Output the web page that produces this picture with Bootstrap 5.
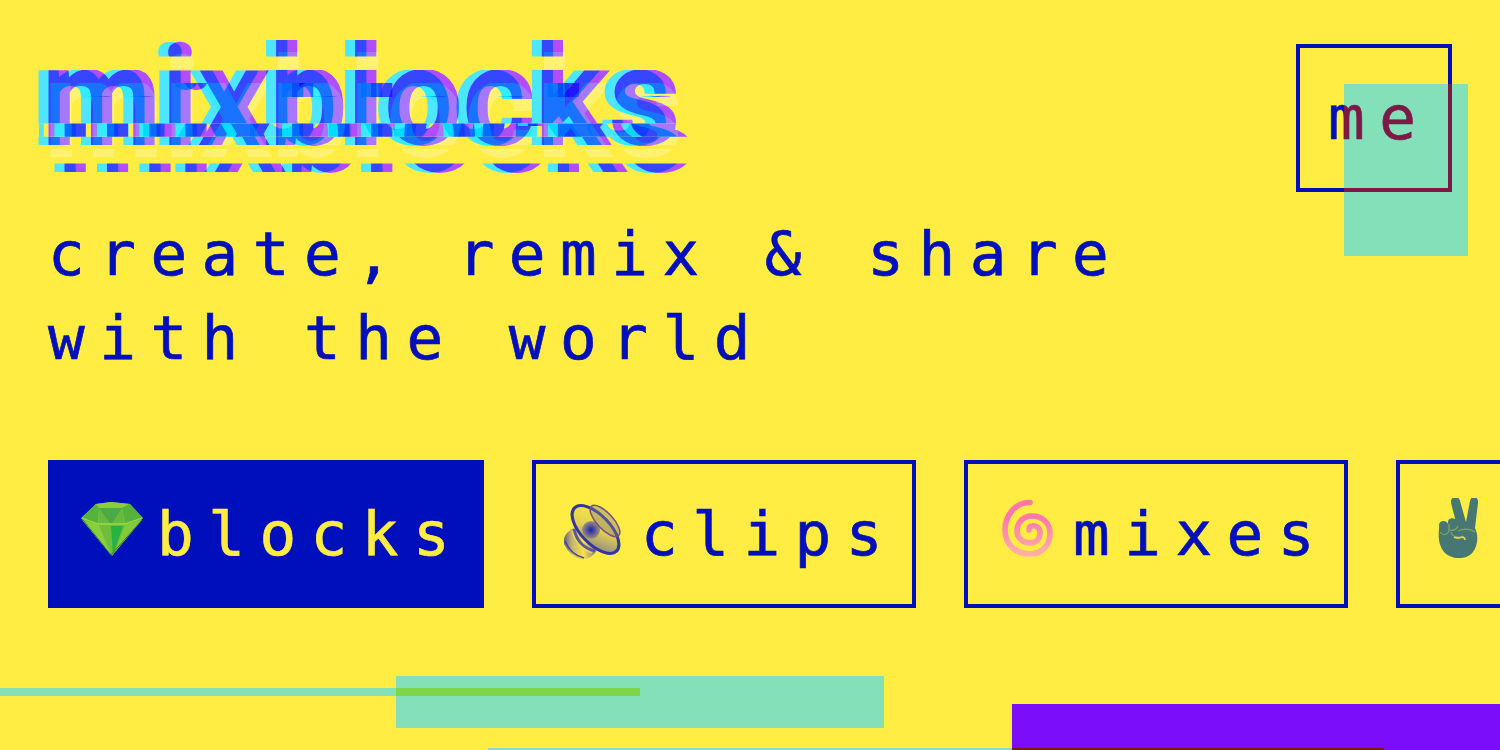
<!DOCTYPE html>
<html lang="en">
<head>
<meta charset="utf-8">
<title>mixblocks</title>
<meta name="viewport" content="width=device-width, initial-scale=1">
<link href="https://cdn.jsdelivr.net/npm/bootstrap@5.3.0/dist/css/bootstrap.min.css" rel="stylesheet">
<style>
:root{--ink:#000fbc;--sun:#ffed43;--violet:#7c0dfa}
body{background:var(--sun);color:var(--ink);font:61px/83.6px "DejaVu Sans Mono",monospace;letter-spacing:14.48px;height:750px}
.stage{height:750px;isolation:isolate;background:var(--sun)}
.wordmark{width:680px;height:150px;margin-left:-24px;margin-top:-14px}
.wordmark text{font:bold 137.5px Roboto,sans-serif;letter-spacing:.7px;stroke-width:1.8px}
.cy{fill:#4de6ff;stroke:#4de6ff}.pu{fill:#b24dff;stroke:#b24dff;mix-blend-mode:multiply}
.iso{isolation:isolate}.mul{mix-blend-mode:multiply}
.topbar{padding-top:44px;height:192px}
.box-btn{height:148px;border:4px solid var(--ink);border-radius:0;padding:28px 28px 0;font:inherit;letter-spacing:inherit;line-height:83.6px;color:var(--ink);white-space:nowrap;text-align:left;display:flex;flex:none;-webkit-text-stroke:.7px}
.box-btn svg{width:64px;height:70px;margin:6px 13px 0 0;flex:none}
.box-btn.active{background:var(--ink)!important;color:var(--sun)!important;border-color:var(--ink)!important}
.btn-me{width:156px}.btn-wide{width:436px}.btn-tab{width:384px}
.tagline{margin-top:20px;height:168px;-webkit-text-stroke:.7px}
.tabs-row{gap:48px;margin-top:80px}
.shade{background:var(--violet);mix-blend-mode:exclusion;pointer-events:none}
.s1{left:1344px;top:84px;width:124px;height:172px}
.s2{left:0;top:688px;width:640px;height:8px}
.s3{left:396px;top:676px;width:488px;height:52px}
.s4{left:1012px;top:704px;width:488px;height:46px;mix-blend-mode:normal}
.s5{left:488px;top:748px;width:896px;height:2px}
</style>
</head>
<body>
<main class="stage position-relative overflow-hidden px-5">
  <header class="topbar d-flex justify-content-between">
    <h1 class="m-0">
      <svg class="wordmark d-block" viewBox="24 30 680 150" role="img" aria-label="mixblocks">
        <defs>
          <clipPath id="c1"><path d="M0 30H720V56.500H0ZM0 70H720V123.500H0ZM0 136.700H720V150H0Z"/></clipPath>
          <clipPath id="c2"><path d="M0 50H720V69H0ZM0 83H720V145H0ZM0 149H720V160H0Z"/></clipPath>
          <clipPath id="c3"><path d="M0 83H720V97H0ZM0 163.500H720V180H0Z"/></clipPath>
          <clipPath id="band"><path d="M39 123.500H720V136.700H39Z"/></clipPath>
        </defs>
        <g class="iso">
          <g class="iso" clip-path="url(#c1)"><text class="cy" x="32" y="143.800">mixblocks</text><text class="pu" x="42" y="143.800" aria-hidden="true">mixblocks</text></g>
          <g class="iso mul" clip-path="url(#c3)" aria-hidden="true"><text class="cy" x="48" y="170.800">mixblocks</text><text class="pu" x="58" y="170.800">mixblocks</text></g>
          <g class="iso" clip-path="url(#band)" aria-hidden="true">
            <text class="pu" x="42" y="143.800">mixblocks</text>
            <g class="iso"><text class="cy" x="48" y="170.800">mixblocks</text><text class="pu" x="58" y="170.800">mixblocks</text></g>
            <text class="cy mul" x="16" y="143.800">mixblocks</text>
          </g>
        </g>
        <g clip-path="url(#c2)" style="mix-blend-mode:screen" aria-hidden="true"><text x="44" y="156" fill="#003e3e" stroke="#003e3e">mixblocks</text></g>
        <g clip-path="url(#c2)" style="mix-blend-mode:color-burn" aria-hidden="true"><text x="44" y="156" fill="#e0ffff" stroke="#e0ffff">mixblocks</text></g>
      </svg>
    </h1>
    <a class="btn box-btn btn-me" href="#">me</a>
  </header>
  <p class="tagline mb-0">create, remix &amp; share<br>with the world</p>
  <nav class="tabs-row d-flex">
    <a class="btn box-btn btn-wide active" href="#">
      <svg viewBox="0 0 64 70">
        <path fill="#70bd3d" d="M16 6L31 4 50 6 63 20 32 58 1 20Z"/>
        <path fill="#4baa45" d="M19 10H42L44 25H19Z"/><path fill="#8bce3b" d="M16 6L31 4 50 6 42 10H19L2 21ZM2 22L19 27 31 57Z"/>
        <path fill="#55b33d" d="M16 6L19 10 18 25 2 20ZM50 6L42 10 45 25 62 20Z"/><path fill="#92d33d" d="M19 10L30 25H18ZM42 10L32 25H45Z" opacity=".4"/>
        <path fill="#26b33e" d="M31 28H43L33 57Z"/><path fill="#83cb38" d="M45 27L62 22 35 54Z"/>
        <path d="M2 20L18 26 45 26 62 20" fill="none" stroke="#9bda43" stroke-width="1.300"/><path d="M3 22L31 57 62 22" fill="none" stroke="#26803f" stroke-width="1"/>
      </svg>blocks</a>
    <a class="btn box-btn btn-tab" href="#">
      <svg viewBox="0 0 64 70">
        <defs><linearGradient id="sp"><stop stop-color="#655c96"/><stop offset=".25" stop-color="#c6b66d"/><stop offset=".6" stop-color="#f6e246"/><stop offset="1" stop-color="#817793"/></linearGradient>
        <linearGradient id="cone" x2="1" y2="1"><stop stop-color="#ffed43"/><stop offset=".5" stop-color="#e0d050"/><stop offset="1" stop-color="#77709a"/></linearGradient><radialGradient id="hub"><stop stop-color="#1620b5"/><stop offset="1" stop-color="#a09277"/></radialGradient></defs>
        <path d="M9 30Q-2 37 0 46Q6 59 18 61.500Q28 61 33 52L12 30Z" fill="url(#sp)"/><path d="M1 43Q7 57 20 60" fill="none" stroke="#45449d" stroke-width="1.600"/><path d="M10 31Q14 49 31 53" fill="none" stroke="#5d5998" stroke-width="3"/><path d="M8 33Q12 50 28 55" fill="none" stroke="#eee06a" stroke-width="1"/>
        <ellipse cx="31.500" cy="31.500" rx="31" ry="15" transform="rotate(46 31.500 31.500)" fill="url(#cone)" stroke="#8b8190" stroke-width="1.500"/>
        <ellipse cx="31.500" cy="31.500" rx="30" ry="14.500" transform="rotate(46 31.500 31.500)" fill="none" stroke="#34369f" stroke-width="3"/>
        <circle cx="27" cy="32" r="9" fill="url(#hub)"/>
        <ellipse cx="41" cy="23" rx="20" ry="8" transform="rotate(47 41 23)" fill="#857c83" fill-opacity=".4" stroke="#784d83" stroke-width="1.500"/>
      </svg>clips</a>
    <a class="btn box-btn btn-tab" href="#">
      <svg viewBox="0 0 64 70"><defs><linearGradient id="pk" gradientUnits="userSpaceOnUse" x1="0" y1="0" x2="0" y2="60"><stop offset=".3" stop-color="#ff75ad"/><stop offset="1" stop-color="#ffb5aa"/></linearGradient></defs>
      <path d="M34 4.500C20 4 9 17 9 32C9 47 20 56 34 56C47 56 54 46 54 35C54 25 46 18 36 18C27 18 21 25 21 33C21 40 27 45 34 45C41 45 44 40 44 35C44 30 40 27 36 28C33 28 33 30 33 32" fill="none" stroke="url(#pk)" stroke-width="5.600" stroke-linecap="round"/></svg>mixes</a>
    <a class="btn box-btn btn-tab" href="#" aria-label="people">
      <svg viewBox="0 3 64 70"><path fill="#477773" d="M11 30C11 25 19 25 20 29V27C20 22 28 22 29 27L30 35 23 8C22 1 31 0 32 6L38 27 42 6C43 0 51 1 50 8L47 33C53 45 47 63 33 63C16 64 9 51 11 34Z"/><path d="M12 37C15 41 20 40 21 35V29M21 35C24 36 29 35 30 31M23 37C24 42 30 43 35 41M30 36Q40 32 47 37" fill="none" stroke="#87a268" stroke-width="1.200"/><path d="M26 42Q29 44 35 42 Q37 43 37 45" fill="none" stroke="#dbd64c" stroke-width="1.800"/></svg></a>
  </nav>
  <div class="shade position-absolute s4"></div>
  <div class="shade position-absolute s1"></div>
  <div class="shade position-absolute s2"></div>
  <div class="shade position-absolute s3"></div>
  <div class="shade position-absolute s5"></div>
</main>
<script src="https://cdn.jsdelivr.net/npm/bootstrap@5.3.0/dist/js/bootstrap.bundle.min.js"></script>
</body>
</html>
